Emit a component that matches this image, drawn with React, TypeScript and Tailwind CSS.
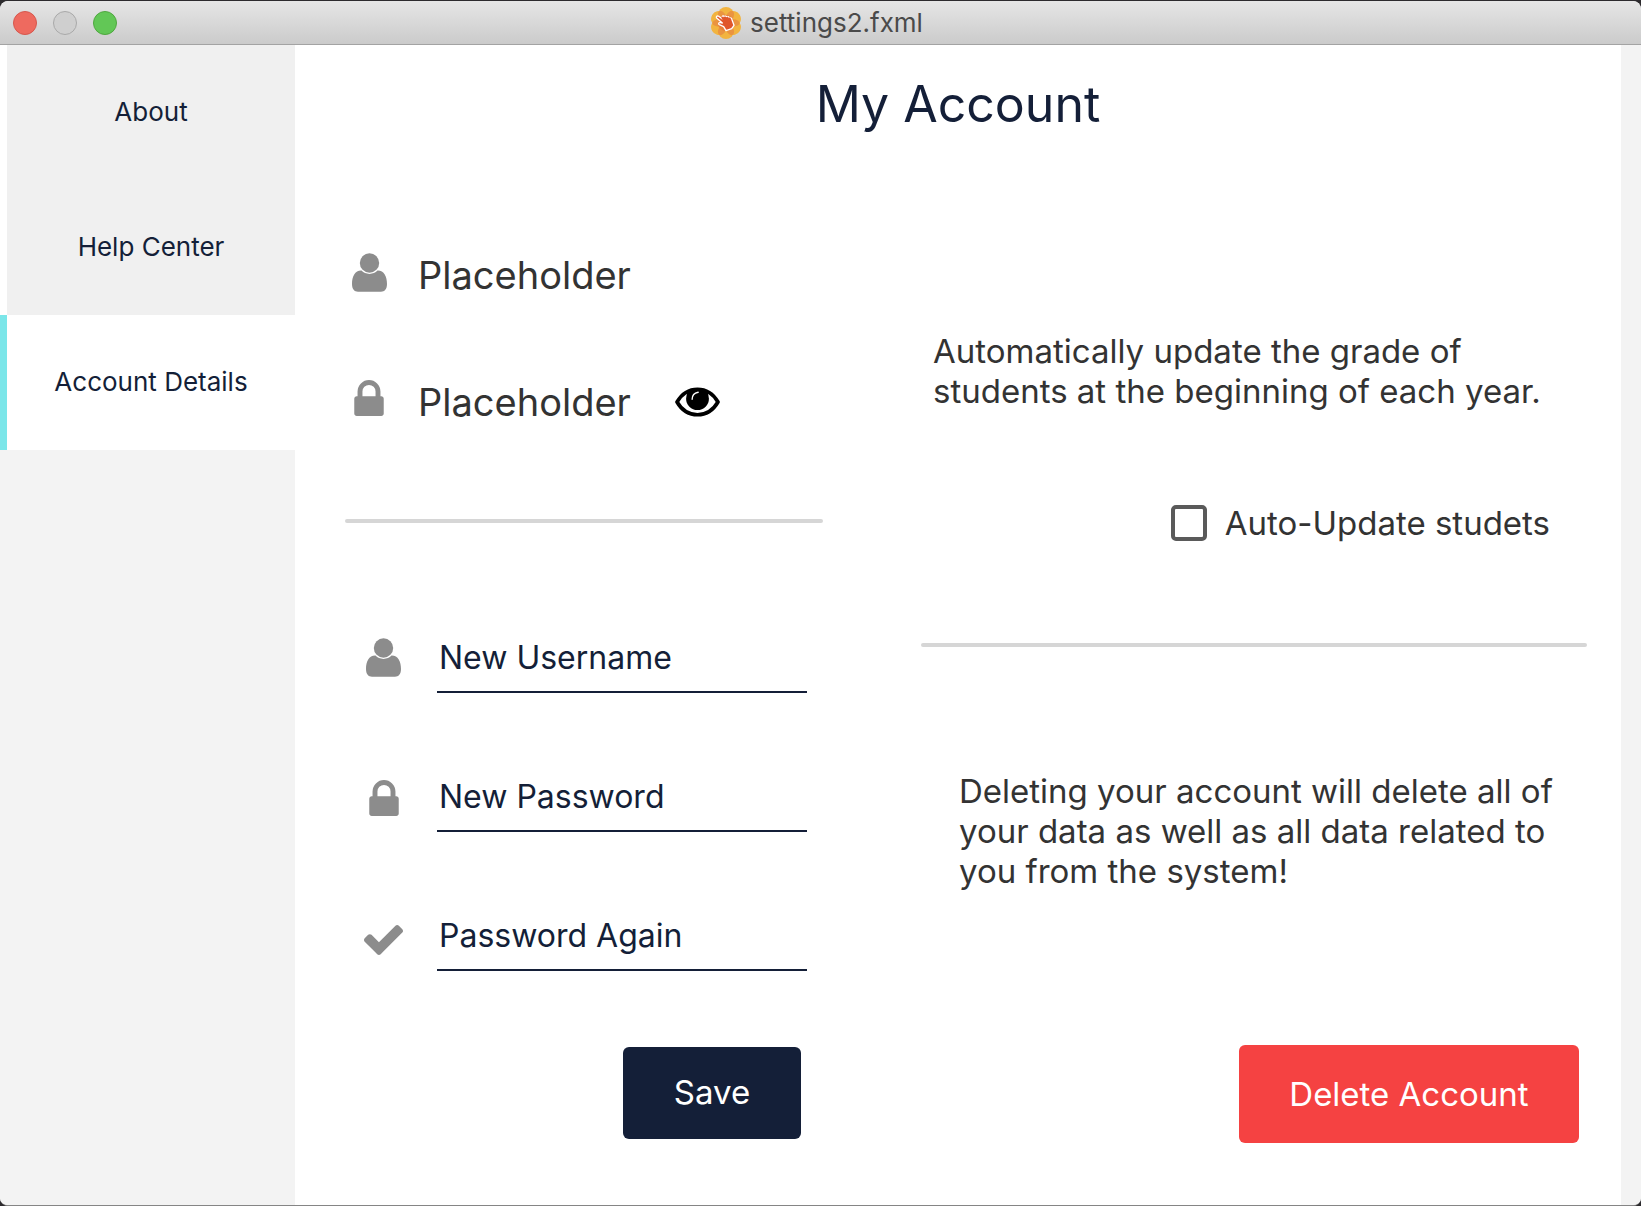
import React from "react";

function UserIcon() {
  return (
    <svg viewBox="0 0 35 39" className="h-[39px] w-[35px] fill-[#8c8c8c]" aria-hidden="true">
      <circle cx="17.5" cy="10" r="9.7" />
      <path d="M9.500 17.600C11.500 19.900 14.300 20.900 17.500 20.900C20.700 20.900 23.500 19.900 25.500 17.600C32 17.400 35 23.500 35 31C35 36.200 32.500 38.700 29 38.700H6C2.500 38.700 0 36.200 0 31C0 23.500 3 17.400 9.500 17.600Z" />
    </svg>
  );
}

function LockIcon() {
  return (
    <svg viewBox="0 128 1152 1408" className="h-[36px] w-[30px] fill-[#8c8c8c]" aria-hidden="true">
      <path d="M320 768h512v-192q0-106-75-181t-181-75-181 75-75 181v192zm832 96v576q0 40-28 68t-68 28h-960q-40 0-68-28t-28-68v-576q0-40 28-68t68-28h32v-192q0-184 132-316t316-132 316 132 132 316v192h32q40 0 68 28t28 68z" />
    </svg>
  );
}

function CheckIcon() {
  return (
    <svg viewBox="121 334 1550 1188" className="h-[30px] w-[39px] fill-[#8c8c8c]" aria-hidden="true">
      <path d="M1671 566q0 40-28 68l-724 724-136 136q-28 28-68 28t-68-28l-136-136-362-362q-28-28-28-68t28-68l136-136q28-28 68-28t68 28l294 295 656-657q28-28 68-28t68 28l136 136q28 28 28 68z" />
    </svg>
  );
}

function EyeIcon() {
  return (
    <svg viewBox="0 0 134 88" className="h-[30px] w-[45px]" aria-hidden="true">
      <path
        d="M6 44C20 20 42 6 67 6C92 6 114 20 128 44C114 68 92 82 67 82C42 82 20 68 6 44Z"
        fill="#fff"
        stroke="#000"
        strokeWidth="11"
        strokeLinejoin="round"
      />
      <path d="M36 14C46 7 56 3 67 3C78 3 88 7 98 14L101 34A34 34 0 1 1 33 34Z" fill="#000" />
      <path d="M51 36C51 24 58 17 69 15" fill="none" stroke="#fff" strokeWidth="4" strokeLinecap="round" />
    </svg>
  );
}

function AppLogo() {
  return (
    <svg viewBox="0 0 96 96" className="size-8" aria-hidden="true">
      <g fill="#f2b440">
        {[0, 60, 120, 180, 240, 300].map((a) => (
          <circle key={a} cx="48" cy="24" r="24" transform={`rotate(${a} 48 48)`} />
        ))}
      </g>
      <g fill="#ea9440">
        {[30, 90, 150, 210, 270, 330].map((a) => (
          <ellipse key={a} cx="48" cy="27" rx="11" ry="20" transform={`rotate(${a} 48 48)`} />
        ))}
      </g>
      <circle cx="48" cy="48" r="24" fill="#e8803a" />
      <path
        d="M20 33C17 29 22 25 26 28L38 37L37 29C38 25 42 26 43 30C45 26 49 27 50 31C53 27 57 29 58 33C62 31 65 34 66 38L72 55L65 65L48 71L41 59L28 53C24 51 26 46 31 47L37 48Z"
        fill="#e0562b"
        stroke="#fff"
        strokeWidth="4"
        strokeLinejoin="round"
      />
      <path d="M36 30L44 44M43 29L50 42M50 30L55 42M58 32L60 42" stroke="#e0562b" strokeWidth="6" />
    </svg>
  );
}

function TitleBar() {
  return (
    <header className="flex h-[44px] items-center rounded-t-lg border-b border-[#a3a3a3] bg-linear-to-b from-[#e6e6e6] to-[#cbcbcb] pr-[21px] pl-[13px]">
      <div className="flex flex-1 gap-4">
        <button aria-label="Close" className="size-6 rounded-full border border-[#d6574d] bg-[#ee6a5f]" />
        <button aria-label="Minimize" className="size-6 rounded-full border border-[#a9a9a9] bg-[#cfcfcf]" />
        <button aria-label="Zoom" className="size-6 rounded-full border border-[#4fa73f] bg-[#62c756]" />
      </div>
      <div className="flex items-center gap-2 text-[26px] text-[#4a4a4a]">
        <AppLogo />
        <span>settings2.fxml</span>
      </div>
      <div className="flex-1" />
    </header>
  );
}

function NavItem({ label, active = false }: { label: string; active?: boolean }) {
  return (
    <a
      href="#"
      aria-current={active ? "page" : undefined}
      className={
        "flex h-[135px] items-center justify-center border-l-[7px] pb-[3px] text-[26px] text-[#141f38] " +
        (active ? "border-[#7be6e9] bg-white" : "border-white bg-[#f0f0f0]")
      }
    >
      {label}
    </a>
  );
}

function Field({ id, label, type, icon }: { id: string; label: string; type: string; icon: React.ReactNode }) {
  return (
    <div className="flex items-end">
      <label htmlFor={id} aria-label={label} className="flex w-[41px] shrink-0 justify-center pb-4">
        {icon}
      </label>
      <input
        id={id}
        type={type}
        placeholder={label}
        className="ml-[33px] h-[72px] min-w-0 flex-1 border-b-2 border-[#141f38] bg-transparent pt-[3px] pl-[2px] text-[32px] text-[#141f38] outline-none placeholder:text-[#141f38] placeholder:opacity-100"
      />
    </div>
  );
}

function Divider() {
  return <hr className="h-1 rounded-xs border-0 bg-[#d6d6d6]" />;
}

export default function App() {
  return (
    <div className="flex min-h-screen flex-col bg-[#2d2b2e] pt-px font-['Inter',sans-serif]">
      <div className="flex flex-1 flex-col overflow-hidden rounded-lg border-b border-[#858585] bg-white">
        <TitleBar />
        <div className="flex flex-1">
          <nav className="w-[295px] shrink-0 bg-[#f3f3f3]">
            <NavItem label="About" />
            <NavItem label="Help Center" />
            <NavItem label="Account Details" active />
          </nav>

          <main className="min-w-0 flex-1 pt-[31px]">
            <h1 className="text-center text-[50px] leading-[56px] text-[#141f38]">My Account</h1>
            <div className="grid grid-cols-[478fr_666fr] gap-x-[98px] pr-[34px] pl-[50px]">
              <section className="min-w-0 pt-[121px]">
                <div className="flex items-start pl-[3px] text-[38px] leading-[44px] text-[#333333]">
                  <span className="flex w-[42px] justify-center">
                    <UserIcon />
                  </span>
                  <span className="ml-7">Placeholder</span>
                </div>
                <div className="mt-[83px] flex items-start pl-[3px] text-[38px] leading-[44px] text-[#333333]">
                  <span className="flex w-[42px] justify-center">
                    <LockIcon />
                  </span>
                  <span className="ml-7">Placeholder</span>
                  <button aria-label="Show password" className="ml-11 flex h-[44px] items-center">
                    <EyeIcon />
                  </button>
                </div>
                <div className="mt-[95px]">
                  <Divider />
                </div>
                <form className="mt-[98px] pr-[16px] pl-[18px]">
                  <div className="flex flex-col gap-[67px]">
                    <Field id="username" label="New Username" type="text" icon={<UserIcon />} />
                    <Field id="password" label="New Password" type="password" icon={<LockIcon />} />
                    <Field id="password-again" label="Password Again" type="password" icon={<CheckIcon />} />
                  </div>
                  <div className="mt-[76px] flex justify-end pr-[6px]">
                    <button type="button" className="h-[92px] w-[178px] rounded-md bg-[#141f38] text-[33px] text-white">
                      Save
                    </button>
                  </div>
                </form>
              </section>

              <section className="min-w-0 pt-[199px] text-[33px] leading-[40px] text-[#333333]">
                <p className="pl-[12px] whitespace-nowrap">
                  Automatically update the grade of
                  <br />
                  students at the beginning of each year.
                </p>
                <label className="mt-[92px] flex items-center justify-end gap-[18px] pr-[37px]">
                  <input
                    type="checkbox"
                    className="size-9 appearance-none rounded-[5px] border-4 border-[#5a5a5a] bg-white checked:bg-[#5a5a5a]"
                  />
                  Auto-Update studets
                </label>
                <div className="mt-[100px]">
                  <Divider />
                </div>
                <p className="mt-[124px] pl-[38px] whitespace-nowrap">
                  Deleting your account will delete all of
                  <br />
                  your data as well as all data related to
                  <br />
                  you from the system!
                </p>
                <div className="mt-[154px] flex justify-end pr-2">
                  <button className="h-[98px] w-[340px] rounded-md bg-[#f54242] text-white">Delete Account</button>
                </div>
              </section>
            </div>
          </main>
          <div className="w-5 shrink-0 bg-[#f3f3f3]" />
        </div>
      </div>
    </div>
  );
}
